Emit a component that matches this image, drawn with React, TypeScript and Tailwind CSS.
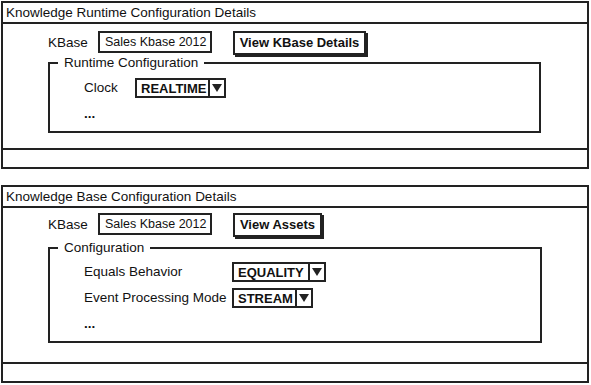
import React from "react";

const font = { fontFamily: '"Liberation Sans", Arial, sans-serif' };

function Select({ value, width }: { value: string; width: string }) {
  return (
    <div className={`flex h-[20px] ${width} items-stretch border-2 border-[#222] bg-white`}>
      <div className="flex flex-1 items-center whitespace-nowrap pl-[4px] text-[13px] font-bold leading-none text-[#111]">
        {value}
      </div>
      <div className="flex w-[16px] items-center justify-center border-l-2 border-[#222]">
        <svg width="10" height="8" viewBox="0 0 10 8">
          <polygon points="0,0 10,0 5,8" fill="#222" />
        </svg>
      </div>
    </div>
  );
}

function KBaseRow({ button, btnWidth }: { button: string; btnWidth: string }) {
  return (
    <div className="flex h-[26px] items-start pl-[45px]">
      <div className="flex h-[22px] w-[50px] items-center pt-[2px] text-[13.5px] text-[#111]">KBase</div>
      <div className="flex h-[22px] w-[114px] items-center whitespace-nowrap border-2 border-[#222] pl-[5px] text-[12.5px] font-medium text-[#111]">
        Sales Kbase 2012
      </div>
      <div
        className={`ml-[21px] flex h-[24px] ${btnWidth} items-center justify-center whitespace-nowrap border-2 border-[#222] bg-white text-[13px] font-bold text-[#111] shadow-[2px_2px_0_#222]`}
      >
        {button}
      </div>
    </div>
  );
}

function Panel({
  title,
  bodyH,
  children,
}: {
  title: string;
  bodyH: string;
  children: React.ReactNode;
}) {
  return (
    <div className="ml-[1px] flex w-[588px] flex-col">
      <div className="flex h-[23px] items-center whitespace-nowrap border-2 border-[#222] pl-[3px] pt-[1px] text-[13.5px] text-[#111]">
        {title}
      </div>
      <div className={`${bodyH} border-x-2 border-[#222]`}>{children}</div>
      <div className="h-[21px] border-2 border-[#222]" />
    </div>
  );
}

export default function App() {
  return (
    <div className="h-[385px] w-[591px] overflow-hidden bg-white pt-[1px]" style={font}>
      <Panel title="Knowledge Runtime Configuration Details" bodyH="h-[124px]">
        <div className="pt-[7px]">
          <KBaseRow button="View KBase Details" btnWidth="w-[133px]" />
        </div>
        <fieldset className="ml-[45px] -mt-[3px] w-[493px] border-2 border-[#222]">
          <legend className="ml-[8px] h-[18px] whitespace-nowrap px-[6px] text-[13.5px] leading-[18px] text-[#111]">
            Runtime Configuration
          </legend>
          <div className="flex flex-col gap-[6px] pb-[7px] pl-[34px] pt-[6px]">
            <div className="flex h-[20px] items-center">
              <div className="w-[51px] text-[13.5px] text-[#111]">Clock</div>
              <Select value="REALTIME" width="w-[91px]" />
            </div>
            <div className="flex h-[20px] items-center text-[13.5px] font-bold text-[#111]">...</div>
          </div>
        </fieldset>
      </Panel>
      <div className="h-[16px]" />
      <Panel title="Knowledge Base Configuration Details" bodyH="h-[154px]">
        <div className="pt-[5px]">
          <KBaseRow button="View Assets" btnWidth="w-[89px]" />
        </div>
        <fieldset className="ml-[45px] w-[494px] border-2 border-[#222]">
          <legend className="ml-[8px] h-[18px] whitespace-nowrap px-[6px] text-[13.5px] leading-[18px] text-[#111]">
            Configuration
          </legend>
          <div className="flex flex-col gap-[6px] pb-[7px] pl-[34px] pt-[5px]">
            <div className="flex h-[20px] items-center">
              <div className="w-[148px] whitespace-nowrap text-[13.5px] text-[#111]">Equals Behavior</div>
              <Select value="EQUALITY" width="w-[94px]" />
            </div>
            <div className="flex h-[20px] items-center">
              <div className="w-[148px] whitespace-nowrap text-[13.5px] text-[#111]">Event Processing Mode</div>
              <Select value="STREAM" width="w-[81px]" />
            </div>
            <div className="flex h-[20px] items-center text-[13.5px] font-bold text-[#111]">...</div>
          </div>
        </fieldset>
      </Panel>
    </div>
  );
}
